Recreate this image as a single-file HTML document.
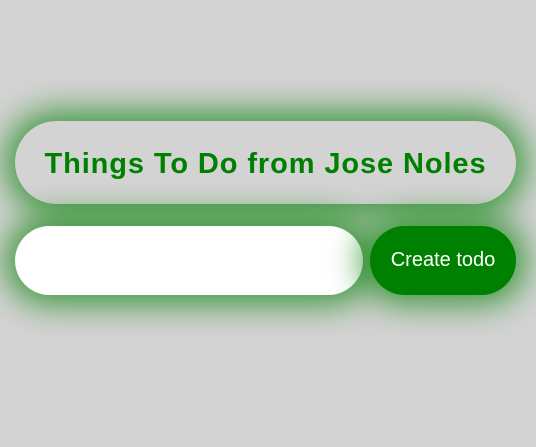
<!DOCTYPE html>
<html><head><style>
body{margin:0;width:536px;height:447px;background:#d3d3d3;position:relative;overflow:hidden;font-family:"Liberation Sans",sans-serif}
.h{position:absolute;left:15px;top:121px;width:501px;height:83px;border-radius:42px;background:#d3d3d3;box-shadow:0 0 32px 10px rgba(0,128,0,.7);display:flex;align-items:center;justify-content:center;color:#008000;font-weight:bold;font-size:29px;letter-spacing:0.9px;padding-top:4px;box-sizing:border-box}
.i{position:absolute;left:15px;top:226px;width:348px;height:69px;border-radius:35px;background:#fff;box-shadow:0 0 32px 10px rgba(0,128,0,.7)}
.b{position:absolute;left:370px;top:226px;width:146px;height:69px;border-radius:35px;background:#008000;box-shadow:0 0 32px 10px rgba(0,128,0,.7);color:#fff;font-size:20px;display:flex;align-items:center;justify-content:center}
</style></head><body>
<div class="h">Things To Do from Jose Noles</div>
<div class="i"></div>
<div class="b">Create todo</div>
</body></html>
